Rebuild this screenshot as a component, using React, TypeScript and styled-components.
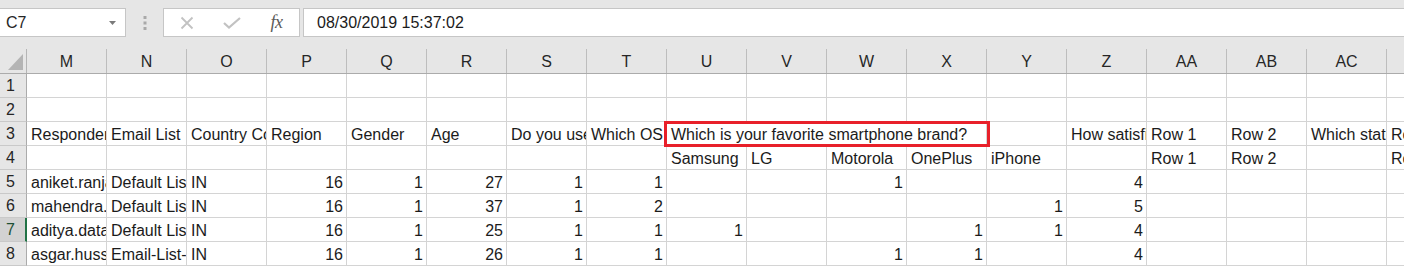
import { createGlobalStyle, styled } from "styled-components";

const COLS = ["M", "N", "O", "P", "Q", "R", "S", "T", "U", "V", "W", "X", "Y", "Z", "AA", "AB", "AC", "AD"];
const COL_W = 80;

type Value = string | number;

const DATA: Record<number, Record<string, Value>> = {
  1: {},
  2: {},
  3: {
    M: "Respondent Email",
    N: "Email List",
    O: "Country Code",
    P: "Region",
    Q: "Gender",
    R: "Age",
    S: "Do you use a smartphone?",
    T: "Which OS",
    U: "Which is your favorite smartphone brand?",
    Z: "How satisfied are you?",
    AA: "Row 1",
    AB: "Row 2",
    AC: "Which state do you live in?",
    AD: "Row 1",
  },
  4: { U: "Samsung", V: "LG", W: "Motorola", X: "OnePlus", Y: "iPhone", AA: "Row 1", AB: "Row 2", AD: "Row 1" },
  5: { M: "aniket.ranjan@questionpro.com", N: "Default List", O: "IN", P: 16, Q: 1, R: 27, S: 1, T: 1, W: 1, Z: 4 },
  6: { M: "mahendra.prabhu@questionpro.com", N: "Default List", O: "IN", P: 16, Q: 1, R: 37, S: 1, T: 2, Y: 1, Z: 5 },
  7: { M: "aditya.datar@questionpro.com", N: "Default List", O: "IN", P: 16, Q: 1, R: 25, S: 1, T: 1, U: 1, X: 1, Y: 1, Z: 4 },
  8: { M: "asgar.hussain@questionpro.com", N: "Email-List-1", O: "IN", P: 16, Q: 1, R: 26, S: 1, T: 1, W: 1, X: 1, Z: 4 },
};

// text that spills over empty neighbours: row -> col -> number of columns
const SPANS: Record<number, Record<string, number>> = { 3: { U: 4 } };
const MARKED = { row: 3, col: "U" };
const ACTIVE_ROW = 7;

const GlobalStyle = createGlobalStyle`
  body {
    margin: 0;
    overflow: hidden;
    background: #ffffff;
    font-family: "Liberation Sans", Arial, sans-serif;
  }
`;

const App = () => {
  const renderRow = (r: number) => {
    const cells = [];
    const values = DATA[r];
    for (let i = 0; i < COLS.length; i++) {
      const col = COLS[i];
      const span = SPANS[r]?.[col] ?? 1;
      const v = values[col];
      const marked = MARKED.row === r && MARKED.col === col;
      cells.push(
        <St.Cell key={col} $w={COL_W * span} $right={typeof v === "number"} $spill={span > 1}>
          {v}
          {marked && <St.Marker />}
        </St.Cell>
      );
      i += span - 1;
    }
    return (
      <St.Row key={r}>
        <St.RowHead $active={r === ACTIVE_ROW}>{r}</St.RowHead>
        {cells}
      </St.Row>
    );
  };

  return (
    <St.Window>
      <GlobalStyle />
      <St.FormulaBar>
        <St.NameBox>
          <span>C7</span>
          <svg width="7" height="4" viewBox="0 0 7 4">
            <path d="M0 0 L7 0 L3.5 4 Z" fill="#7a7a7a" />
          </svg>
        </St.NameBox>
        <St.Gripper>
          <svg width="4" height="14" viewBox="0 0 4 14">
            <rect x="0.5" y="0" width="3" height="3" fill="#a9a9a9" />
            <rect x="0.5" y="5.5" width="3" height="3" fill="#a9a9a9" />
            <rect x="0.5" y="11" width="3" height="3" fill="#a9a9a9" />
          </svg>
        </St.Gripper>
        <St.ButtonBox>
          <St.BarButton>
            <svg width="14" height="14" viewBox="0 0 14 14">
              <path d="M1.5 1.5 L12.5 12.5 M12.5 1.5 L1.5 12.5" stroke="#c2c2c2" strokeWidth="1.8" fill="none" />
            </svg>
          </St.BarButton>
          <St.BarButton>
            <svg width="18" height="12" viewBox="0 0 18 12">
              <path d="M1 6 L6 10.5 L17 1" stroke="#c2c2c2" strokeWidth="2.2" fill="none" />
            </svg>
          </St.BarButton>
          <St.BarButton>
            <St.Fx>fx</St.Fx>
          </St.BarButton>
        </St.ButtonBox>
        <St.FormulaInput>08/30/2019 15:37:02</St.FormulaInput>
      </St.FormulaBar>

      <St.Sheet>
        <St.HeadRow>
          <St.Corner>
            <svg width="27" height="24" viewBox="0 0 27 24">
              <path d="M23 5 L23 21 L8 21 Z" fill="#b4b4b4" />
            </svg>
          </St.Corner>
          {COLS.map((c) => (
            <St.ColHead key={c}>{c}</St.ColHead>
          ))}
        </St.HeadRow>
        {[1, 2, 3, 4, 5, 6, 7, 8].map(renderRow)}
      </St.Sheet>
    </St.Window>
  );
};

export default App;

const St = {
  Window: styled.div`
    width: 1404px;
    height: 267px;
    overflow: hidden;
    background: #ffffff;
    color: #1b1b1b;
    font-size: 16px;
  `,
  FormulaBar: styled.div`
    display: flex;
    align-items: center;
    height: 49px;
    padding: 8px 0 12px;
    box-sizing: border-box;
    background: #e6e6e6;
  `,
  NameBox: styled.div`
    display: flex;
    align-items: center;
    justify-content: space-between;
    flex: none;
    width: 126px;
    height: 29px;
    padding: 0 9px 0 6px;
    box-sizing: border-box;
    background: #ffffff;
    border: 1px solid #c6c6c6;
    border-left: none;
    color: #262626;

    svg {
      margin-top: 1px;
    }
  `,
  Gripper: styled.div`
    display: flex;
    flex: none;
    margin-left: 17px;
    width: 4px;
  `,
  ButtonBox: styled.div`
    display: flex;
    flex: none;
    margin-left: 16px;
    width: 137px;
    height: 29px;
    box-sizing: border-box;
    background: #ffffff;
    border: 1px solid #c6c6c6;
  `,
  BarButton: styled.div`
    display: flex;
    align-items: center;
    justify-content: center;
    width: 45px;
  `,
  Fx: styled.span`
    font-family: "Liberation Serif", "Times New Roman", serif;
    font-style: italic;
    font-size: 18px;
    color: #5a5a5a;
    letter-spacing: -0.5px;
  `,
  FormulaInput: styled.div`
    display: flex;
    align-items: center;
    flex: 1;
    margin-left: 3px;
    height: 29px;
    padding-left: 13px;
    box-sizing: border-box;
    background: #ffffff;
    border: 1px solid #c6c6c6;
    border-right: none;
    color: #1b1b1b;
  `,
  Sheet: styled.div`
    display: flex;
    flex-direction: column;
    overflow: hidden;
  `,
  HeadRow: styled.div`
    display: flex;
    height: 25px;
    box-sizing: border-box;
    background: #e6e6e6;
    border-bottom: 1px solid #ababab;
  `,
  Corner: styled.div`
    flex: none;
    width: 27px;
    box-sizing: border-box;
    border-right: 1px solid #b5b5b5;

    svg {
      display: block;
    }
  `,
  ColHead: styled.div`
    display: flex;
    align-items: center;
    justify-content: center;
    flex: none;
    width: ${COL_W}px;
    box-sizing: border-box;
    padding-top: 1px;
    border-right: 1px solid #bdbdbd;
    color: #262626;
  `,
  Row: styled.div`
    display: flex;
    height: 24px;
  `,
  RowHead: styled.div<{ $active?: boolean }>`
    display: flex;
    align-items: flex-end;
    flex: none;
    width: 27px;
    padding: 0 0 1px 6px;
    line-height: 20px;
    box-sizing: border-box;
    background: ${(p) => (p.$active ? "#d2d2d2" : "#e6e6e6")};
    border-right: ${(p) => (p.$active ? "2px solid #217346" : "1px solid #ababab")};
    border-bottom: 1px solid #c9c9c9;
    color: ${(p) => (p.$active ? "#1d4f33" : "#262626")};
  `,
  Cell: styled.div<{ $w: number; $right?: boolean; $spill?: boolean }>`
    position: ${(p) => (p.$spill ? "relative" : "static")};
    display: flex;
    align-items: flex-end;
    justify-content: ${(p) => (p.$right ? "flex-end" : "flex-start")};
    flex: none;
    width: ${(p) => p.$w}px;
    padding: 0 3px 0 4px;
    line-height: 20px;
    box-sizing: border-box;
    white-space: nowrap;
    overflow: ${(p) => (p.$spill ? "visible" : "hidden")};
    border-right: 1px solid #d4d4d4;
    border-bottom: 1px solid #d4d4d4;
  `,
  Marker: styled.div`
    position: absolute;
    left: -3px;
    top: -1px;
    width: 326px;
    height: 26px;
    box-sizing: border-box;
    border: 3px solid #e8202a;
  `,
};
